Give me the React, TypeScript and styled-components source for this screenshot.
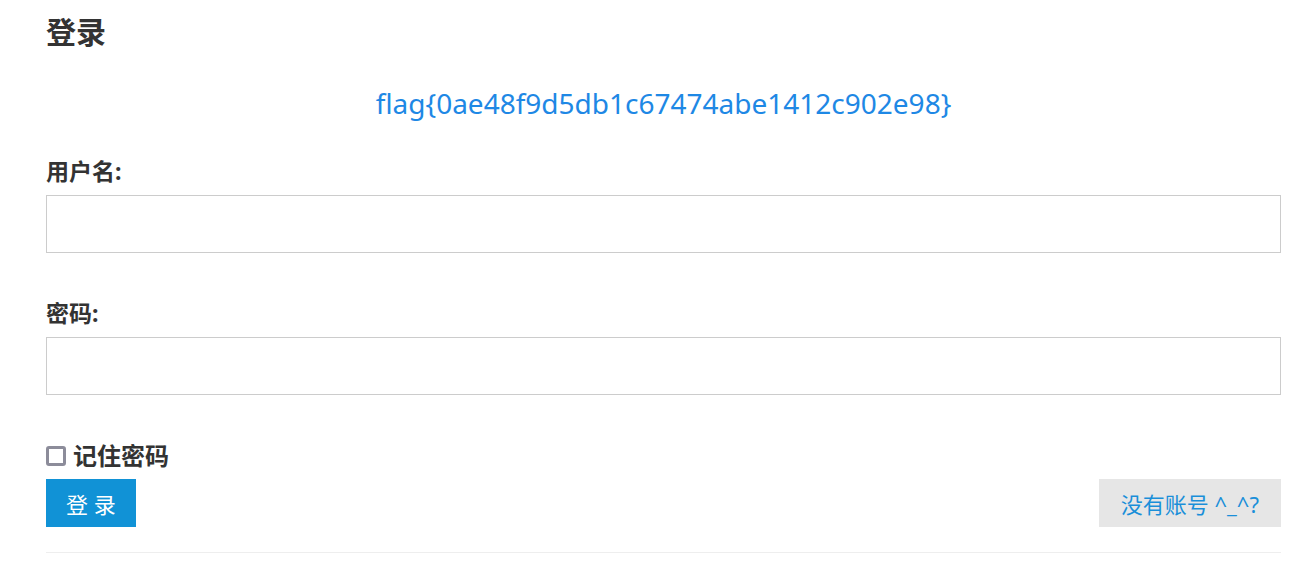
import React, { type FC } from 'react'
import styled, { createGlobalStyle } from 'styled-components'

const GlobalStyle = createGlobalStyle`
  html, body {
    margin: 0;
    padding: 0;
    background: #fff;
  }
  body {
    font-family: "Noto Sans", "Noto Sans CJK SC", sans-serif;
    color: #333;
  }
`

const Page = styled.div`
  padding: 12px 29px 0 46px;
  display: flex;
  flex-direction: column;
`

const Title = styled.h2`
  margin: 0;
  font-size: 30px;
  line-height: 40px;
  font-weight: 700;
  color: #333;
`

const Flag = styled.p`
  margin: 31px 0 0;
  text-align: center;
  font-size: 28px;
  line-height: 40px;
  color: #1e88e5;
`

const Label = styled.label<{ $gap: number }>`
  display: block;
  margin-top: ${({ $gap }) => $gap}px;
  font-size: 23px;
  line-height: 30px;
  font-weight: 700;
  color: #333;
`

const TextInput = styled.input`
  display: block;
  box-sizing: border-box;
  width: 100%;
  height: 58px;
  margin-top: 9px;
  border: 1px solid #ccc;
  padding: 0 12px;
  font-size: 18px;
  outline: none;
`

const RememberRow = styled.label`
  display: flex;
  align-items: center;
  gap: 7px;
  margin-top: 46px;
  font-size: 24px;
  line-height: 30px;
  font-weight: 700;
  color: #333;
`

const Box = styled.span`
  box-sizing: border-box;
  width: 20px;
  height: 20px;
  border: 3px solid #8c8c9a;
  border-radius: 3px;
`

const Actions = styled.div`
  display: flex;
  justify-content: space-between;
  margin-top: 8px;
`

const ActionButton = styled.button<{ $variant: 'primary' | 'muted' }>`
  height: 48px;
  border: none;
  padding: 0 ${({ $variant }) => ($variant === 'primary' ? 20 : 22)}px;
  font-family: "Noto Sans", "Noto Sans CJK SC", sans-serif;
  font-size: 22px;
  cursor: pointer;
  background: ${({ $variant }) => ($variant === 'primary' ? '#1192d6' : '#e6e6e6')};
  color: ${({ $variant }) => ($variant === 'primary' ? '#fff' : '#1a8fd9')};
`

const Divider = styled.hr`
  margin: 25px 0 0;
  border: none;
  border-top: 1px solid #eee;
`

const App: FC = () => {
  return <>
    <GlobalStyle />
    <Page>
      <Title>登录</Title>
      <Flag>flag{'{'}0ae48f9d5db1c67474abe1412c902e98{'}'}</Flag>
      <Label $gap={33} htmlFor="username">用户名:</Label>
      <TextInput id="username" type="text" />
      <Label $gap={45} htmlFor="password">密码:</Label>
      <TextInput id="password" type="password" />
      <RememberRow>
        <Box />
        记住密码
      </RememberRow>
      <Actions>
        <ActionButton $variant="primary" type="button">登 录</ActionButton>
        <ActionButton $variant="muted" type="button">没有账号 ^_^?</ActionButton>
      </Actions>
      <Divider />
    </Page>
  </>
}

export default App
